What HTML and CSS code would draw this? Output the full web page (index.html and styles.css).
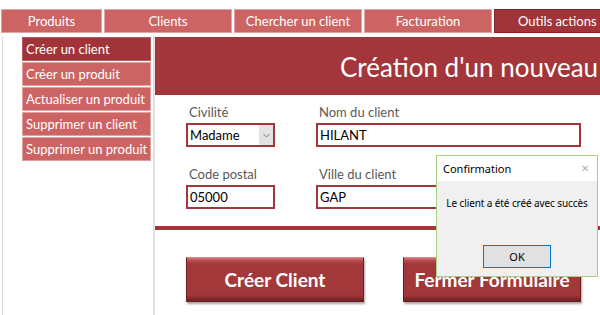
FILE: index.html
```html
<!DOCTYPE html>
<html lang="fr">
<head>
  <meta charset="UTF-8">
  <meta name="viewport" content="width=device-width, initial-scale=1.0">
  <title>Création d'un nouveau client</title>
  <link rel="stylesheet" href="styles.css">
</head>
<body>
  <!--ONGLETS-->
  <nav class="tabs">
    <div class="tab tab-first">Produits</div>
    <div class="tab">Clients</div>
    <div class="tab">Chercher un client</div>
    <div class="tab">Facturation</div>
    <div class="tab active">Outils actions</div>
  </nav>

  <div class="app">
    <!--MENU-->
    <aside class="sidebar">
      <div class="side-item active">Créer un client</div>
      <div class="side-item">Créer un produit</div>
      <div class="side-item">Actualiser un produit</div>
      <div class="side-item">Supprimer un client</div>
      <div class="side-item">Supprimer un produit</div>
    </aside>

    <!--FORMULAIRE-->
    <main class="form">
      <div class="form-head">
        <h1>Création d'un nouveau</h1>
      </div>

      <div class="fields">
        <div class="row">
          <div class="field small">
            <label>Civilité</label>
            <div class="input select">
              <span>Madame</span>
              <span class="drop">
                <svg width="7" height="5" viewBox="0 0 7 5"><path d="M0.5 1 L3.5 4 L6.5 1" fill="none" stroke="#777" stroke-width="1"/></svg>
              </span>
            </div>
          </div>
          <div class="field wide">
            <label>Nom du client</label>
            <div class="input">HILANT</div>
          </div>
        </div>
        <div class="row">
          <div class="field small">
            <label>Code postal</label>
            <div class="input">05000</div>
          </div>
          <div class="field wide">
            <label>Ville du client</label>
            <div class="input">GAP</div>
          </div>
        </div>
      </div>

      <div class="rule"></div>

      <div class="actions">
        <button class="big-btn">Créer Client</button>
        <button class="big-btn">Fermer Formulaire</button>
      </div>
    </main>
  </div>

  <!--BOITE DE DIALOGUE-->
  <div class="dialog">
    <div class="dialog-title">
      <span>Confirmation</span>
      <span class="close">&#10005;</span>
    </div>
    <div class="dialog-body">
      <p>Le client a été créé avec succès</p>
      <button class="ok">OK</button>
    </div>
  </div>
</body>
</html>
```

FILE: styles.css
```css
body {
  margin: 0;
  height: 315px;
  overflow: hidden;
  background: #ffffff;
  font-family: Lato, "Liberation Sans", sans-serif;
  position: relative;
}
.tabs {
  display: flex;
  gap: 2px;
  padding: 9px 0 0 1px;
  white-space: nowrap;
}
.tab {
  flex: 0 0 126px;
  height: 22px;
  line-height: 22px;
  text-align: center;
  color: #ffffff;
  font-size: 13px;
  background: #cd6464;
  border: 1px solid #e4a2a2;
}
.tab-first {
  flex-basis: 99px;
}
.tab.active {
  flex: 1;
  padding-left: 23px;
  text-align: left;
  background: #a13438;
  border-color: #7e2529;
  border-right: none;
}
.app {
  display: flex;
  margin-top: 3px;
  height: 279px;
}
.sidebar {
  width: 129px;
  margin-left: 2px;
  padding: 1px 2px 0 19px;
  border-left: 1px solid #dcdcdc;
  border-right: 1px solid #dcdcdc;
}
.side-item {
  height: 22px;
  line-height: 22px;
  margin-bottom: 1px;
  padding-left: 3px;
  color: #ffffff;
  font-size: 13px;
  background: #cd6464;
  border: 1px solid #e2a0a0;
  white-space: nowrap;
}
.side-item.active {
  background: #a13438;
  border-color: #b85a5d;
}
.form {
  flex: 1;
  min-width: 0;
  padding-top: 1px;
  border-left: 1px solid #e4e4e4;
}
.form-head {
  height: 58px;
  background: #a3363a;
  overflow: hidden;
}
.form-head h1 {
  margin: 0;
  padding-left: 185px;
  line-height: 60px;
  font-size: 26px;
  font-weight: normal;
  color: #ffffff;
  white-space: nowrap;
}
.fields {
  padding: 8px 0 0 31px;
}
.row {
  display: flex;
  gap: 41px;
  margin-bottom: 18px;
}
.field label {
  display: block;
  height: 18px;
  line-height: 18px;
  margin: 0 0 2px 3px;
  font-size: 13px;
  color: #595959;
}
.small {
  width: 89px;
}
.wide {
  width: 265px;
}
.input {
  box-sizing: border-box;
  height: 24px;
  line-height: 20px;
  padding-left: 2px;
  border: 2px solid #a3363a;
  font-size: 13px;
  color: #000000;
  display: flex;
  justify-content: space-between;
}
.drop {
  width: 14px;
  background: #e3e3e3;
  display: flex;
  align-items: center;
  justify-content: center;
}
.rule {
  height: 4px;
  margin-top: -1px;
  background: #a3363a;
}
.actions {
  display: flex;
  gap: 39px;
  padding: 27px 0 0 31px;
}
.big-btn {
  width: 178px;
  height: 45px;
  padding: 0;
  border: 1px solid #6b1f22;
  border-top-color: #e08a8a;
  background: linear-gradient(#d77272 0, #b4484b 3px, #a3383b 6px, #a3383b 85%, #6e2024 100%);
  box-shadow: 1px 2px 2px rgba(60, 60, 60, 0.45);
  color: #ffffff;
  font-family: Lato, "Liberation Sans", sans-serif;
  font-size: 19px;
  font-weight: bold;
  white-space: nowrap;
}
.dialog {
  position: absolute;
  left: 436px;
  top: 155px;
  width: 160px;
  height: 120px;
  border: 1px solid #a7cf82;
  background: #f0f0f0;
  font-family: "Noto Sans", "Open Sans", sans-serif;
  font-size: 11px;
  color: #000000;
}
.dialog-title {
  height: 25px;
  line-height: 25px;
  padding: 0 8px 0 6px;
  background: #ffffff;
  display: flex;
  justify-content: space-between;
}
.close {
  color: #b0b0b0;
  font-size: 10px;
}
.dialog-body {
  text-align: center;
}
.dialog-body p {
  margin: 0;
  padding: 14px 0 0 0;
  line-height: 16px;
  font-size: 10px;
  letter-spacing: -0.1px;
}
.ok {
  margin-top: 34px;
  width: 68px;
  height: 23px;
  border: 1px solid #0078d7;
  background: #e1e1e1;
  font-family: "Noto Sans", "Open Sans", sans-serif;
  font-size: 11px;
  color: #000000;
}
```
